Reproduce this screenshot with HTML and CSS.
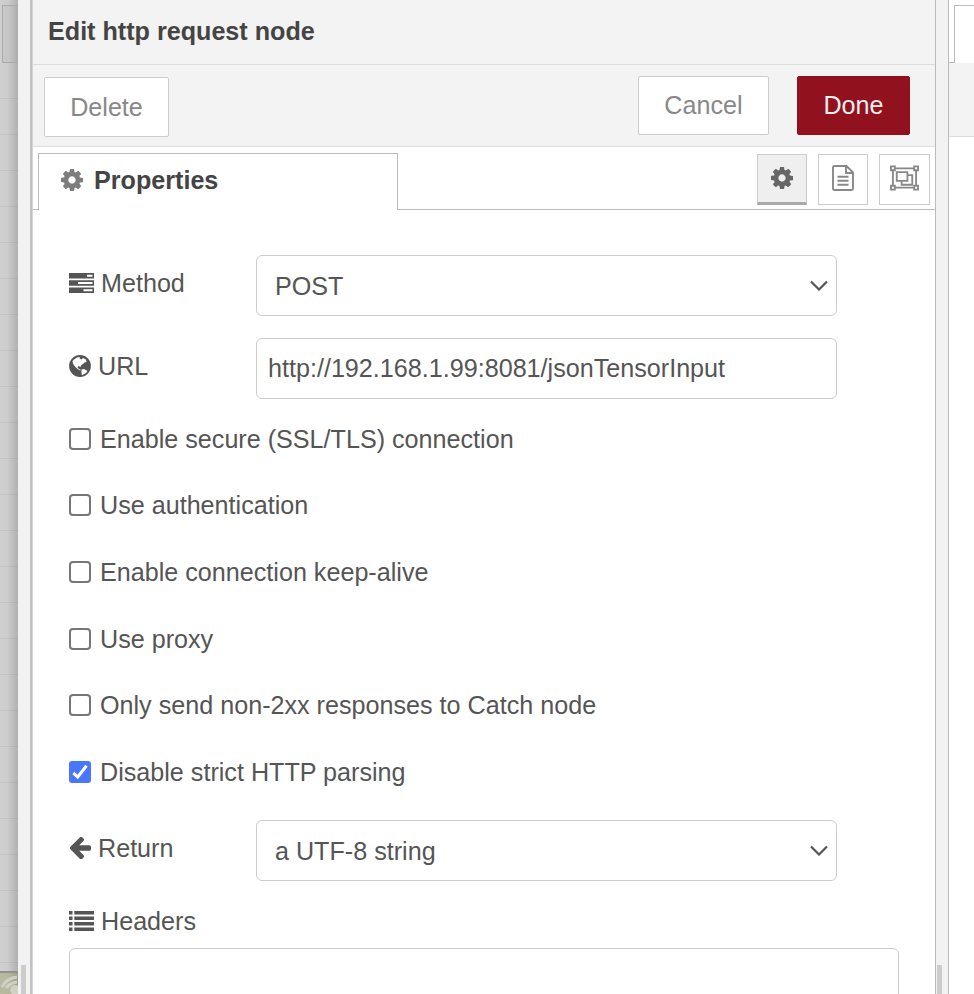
FILE: index.html
```html
<!DOCTYPE html>
<html lang="en">
<head>
<meta charset="utf-8">
<title>Edit http request node</title>
<link rel="stylesheet" href="styles.css">
</head>
<body>
<svg class="defs" aria-hidden="true">
  <symbol id="cog" viewBox="128 128 1536 1536"><path d="M1152 896q0-106-75-181t-181-75-181 75-75 181 75 181 181 75 181-75 75-181zm512-109v222q0 12-8 23t-20 13l-185 28q-19 54-39 91 35 50 107 138 10 12 10 25t-9 23q-27 37-99 108t-94 71q-12 0-26-9l-138-108q-44 23-91 38-16 136-29 186-7 28-36 28h-222q-14 0-24.500-8.500t-11.500-21.500l-28-184q-49-16-90-37l-141 107q-10 9-25 9-14 0-25-11-126-114-165-168-7-10-7-23 0-12 8-23 15-21 51-66.500t54-70.500q-27-50-41-99l-183-27q-13-2-21-12.500t-8-23.500v-222q0-12 8-23t19-13l186-28q14-46 39-92-40-57-107-138-10-12-10-24 0-10 9-23 26-36 98.500-107.500t94.500-71.500q13 0 26 10l138 107q44-23 91-38 16-136 29-186 7-28 36-28h222q14 0 24.500 8.500t11.500 21.500l28 184q49 16 90 37l142-107q9-9 24-9 13 0 25 10 129 119 165 170 7 8 7 22 0 12-8 23-15 21-51 66.500t-54 70.500q26 50 41 98l183 28q13 2 21 12.500t8 23.500z"/></symbol>
</svg>
<div class="app">
  <div class="workspace">
    <div class="ws-tab"></div>
    <div class="ws-grid"></div>
    <div class="ws-node"><svg width="32" height="21" viewBox="0 0 32 21"><path d="M2 14Q7 5 17 4M6 15Q10 10 17 9" fill="none" stroke="#d0d0c4" stroke-width="3"/><circle cx="15" cy="17" r="5" fill="#d0d0c4"/></svg></div>
  </div>
  <div class="bar bar-left"><i class="grip"></i></div>
  <div class="gutter"></div>
  <main class="tray">
    <header class="title">Edit http request node</header>
    <div class="toolbar">
      <button class="btn delete">Delete</button>
      <button class="btn cancel">Cancel</button>
      <button class="btn done">Done</button>
    </div>
    <div class="tabs">
      <div class="tab-pre"></div>
      <div class="tab"><svg class="cog"><use href="#cog"/></svg><span>Properties</span></div>
      <div class="tab-tools">
        <div class="tool active"><svg width="22" height="22"><use href="#cog"/></svg></div>
        <div class="tool"><svg width="22" height="26" viewBox="0 0 22 26"><path d="M2.500 1H14.500L21 7.500V23.500Q21 25 19.500 25H2.500Q1 25 1 23.500V2.500Q1 1 2.500 1ZM14 1V8H21M5.500 11.800H16.500M5.500 15.800H16.500M5.500 19.800H16.500" fill="none" stroke="#888" stroke-width="1.900"/></svg></div>
        <div class="tool wide"><svg width="29" height="26" viewBox="0 0 30 26" fill="none" stroke="#888" stroke-width="1.900"><path d="M5 3H25M5 23H25M3 5V21M27 5V21M1 1H5V5H1ZM25 1H29V5H25ZM1 21H5V25H1ZM25 21H29V25H25ZM7 7H18V16H7ZM18 10H23V20H12V16"/></svg></div>
      </div>
    </div>
    <form class="form">
      <div class="row">
        <label><svg width="25" height="20" viewBox="0 0 25 20"><path fill="#555" d="M0 0H25V5.600H0ZM0 7.200H25V12.800H0ZM0 14.400H25V20H0Z"/><path fill="#fff" d="M18 1.800H23.500V3.800H18ZM9 9H23.500V11H9ZM14.500 16.200H23.500V18.200H14.500Z"/></svg>Method</label>
        <div class="field select"><span>POST</span><svg width="18" height="11" viewBox="0 0 18 11"><path d="M1 1.500L9 9.500L17 1.500"/></svg></div>
      </div>
      <div class="row">
        <label><svg width="22" height="22" viewBox="0 0 22 22"><circle cx="11" cy="11" r="10.900" fill="#555"/><path fill="#fff" d="M5 4.500L8 2.500L11 2L10.500 3.500L12.500 4.500L14 3L17 4.500L17.500 7L15.500 7.500L14 9L12 10.500L11.500 12L9.500 11L8.500 12.500L10 14L12 15L11 15.500L8 13.500L5.500 11L4 8.500L3.500 6ZM12.500 14.500L15 14L18.500 16L17 18L13 20.300L12.500 18Z"/></svg>URL</label>
        <div class="field input">http://192.168.1.99:8081/jsonTensorInput</div>
      </div>
      <div class="checks">
        <div class="check"><i class="box"></i>Enable secure (SSL/TLS) connection</div>
        <div class="check"><i class="box"></i>Use authentication</div>
        <div class="check"><i class="box"></i>Enable connection keep-alive</div>
        <div class="check"><i class="box"></i>Use proxy</div>
        <div class="check"><i class="box"></i>Only send non-2xx responses to Catch node</div>
        <div class="check"><i class="box on"><svg width="22" height="22" viewBox="0 0 22 22"><path d="M4.300 11.800L8.700 16L17.500 4.800" fill="none" stroke="#fff" stroke-width="3"/></svg></i>Disable strict HTTP parsing</div>
      </div>
      <div class="row">
        <label><svg width="22" height="22" viewBox="128 128 1536 1536"><path fill="#555" d="M1664 896v128q0 53-32.500 90.500t-84.500 37.500h-704l293 294q38 36 38 90t-38 90l-75 76q-37 37-90 37-52 0-91-37l-651-652q-37-37-37-90 0-52 37-91l651-650q38-38 91-38 52 0 90 38l75 74q38 38 38 91t-38 91l-293 293h704q52 0 84.500 37.500t32.500 90.500z" transform="translate(0 -64)"/></svg>Return</label>
        <div class="field select"><span>a UTF-8 string</span><svg width="18" height="11" viewBox="0 0 18 11"><path d="M1 1.500L9 9.500L17 1.500"/></svg></div>
      </div>
      <div class="headers"><svg width="25" height="20" viewBox="0 0 25 20"><path fill="#555" d="M0 0H3.500V3.500H0ZM5.300 0H25V3.500H5.300ZM0 5.500H3.500V9H0ZM5.300 5.500H25V9H5.300ZM0 11H3.500V14.500H0ZM5.300 11H25V14.500H5.300ZM0 16.500H3.500V20H0ZM5.300 16.500H25V20H5.300Z"/></svg>Headers</div>
      <div class="list"></div>
    </form>
  </main>
  <div class="bar bar-right"><i class="grip"></i></div>
  <aside class="sidebar">
    <div class="side-tabs"><div class="side-gap"></div><div class="side-tab"></div></div>
    <div class="side-head"></div>
  </aside>
</div>
</body>
</html>
```
FILE: styles.css
```css
* { box-sizing: border-box; }
body { margin: 0; overflow: hidden; font: 25.15px/30px "Liberation Sans", Arial, sans-serif; color: #555; background: #fff; }
svg { display: block; flex: none; }
.defs { position: absolute; width: 0; height: 0; }
.app { display: grid; grid-template-columns: 18px 12px 3px 903px 13px 25px; height: 994px; overflow: hidden; }

.workspace { display: flex; flex-direction: column; overflow: hidden; background: linear-gradient(90deg, #d0d0d0, #cdcdcd 40%, #b0b0b0); }
.ws-tab { flex: none; height: 58px; margin: 5px 0 0 2px; border: 1px solid #aaa; border-width: 1px 0 1px 1px; background: linear-gradient(90deg, #c8c8c8, #c5c5c5 40%, #acacac); }
.ws-grid { flex: none; height: 908px; background: repeating-linear-gradient(rgba(0, 0, 0, 0) 0 35px, rgba(0, 0, 0, .05) 35px 36px); }
.ws-node { flex: none; height: 23px; border-top: 2px solid #929292; background: linear-gradient(90deg, #babaa0, #b7b79c 50%, #9e9e87); }

.bar { background: #f2f2f2; display: flex; align-items: flex-end; }
.grip { width: 5px; height: 29px; background: #ccc; }
.bar-left .grip { margin-left: 3px; }
.bar-right { border-right: 1px solid #bbb; }
.bar-right .grip { margin-left: 1px; }
.gutter { background: linear-gradient(90deg, #c2c2c2 0 2px, #d4d4d4 2px); }

.tray { border-right: 1px solid #bbb; background: #fff; overflow: hidden; }
.title { height: 65px; padding: 16px 0 0 15px; border-bottom: 1px solid #ddd; background: #f3f3f3; color: #444; font-weight: bold; }
.toolbar { display: flex; height: 82px; padding: 11px 25px 0 11px; border-bottom: 1px solid #ddd; background: #f3f3f3; }
.btn { height: 60px; margin: 0; padding: 0; border: 1px solid #ccc; border-radius: 2px; background: #fff; color: #888; font: inherit; }
.delete { width: 125px; margin-top: 1px; }
.cancel { width: 131px; height: 59px; margin-left: auto; padding-bottom: 2px; }
.done { width: 113px; height: 59px; margin-left: 28px; padding-bottom: 2px; border-color: #8f101c; background: #91111e; color: #eee; }

.tabs { display: flex; height: 63px; padding-top: 6px; }
.tab-pre { width: 5px; border-bottom: 1px solid #bbb; }
.tab { display: flex; width: 360px; padding: 11px 0 0 22px; border: 1px solid #bbb; border-bottom: 0; color: #444; font-weight: bold; }
.cog { width: 22px; height: 22px; margin: 4px 11px 0 0; fill: #7d7d7d; }
.tab-tools { flex: 1; display: flex; justify-content: flex-end; gap: 11px; padding: 1px 5px 0 0; border-bottom: 1px solid #bbb; }
.tool { display: flex; justify-content: center; width: 50px; height: 51px; padding-top: 10px; border: 1px solid #ccc; }
.wide { width: 51px; }
.active { padding-top: 12px; background: #efefef; border-bottom: 3px solid #aaa; fill: #666; }

.form { padding: 45px 36px 0 36px; }
.row { display: flex; height: 61px; margin-bottom: 22px; }
.row label { display: flex; align-items: center; gap: 7px; width: 187px; height: 55px; }
.field { display: flex; align-items: center; width: 581px; height: 61px; border: 1px solid #ccc; border-radius: 6px; }
.select { justify-content: space-between; padding: 1px 8px 0 18px; }
.select svg { margin-bottom: 2px; }
.select path { fill: none; stroke: #555; stroke-width: 2.200; }
.input { padding: 0 0 2px 11px; }
.checks { height: 399px; padding-top: 0; margin-top: -1px; margin-bottom: 1px; }
.check { display: flex; align-items: center; gap: 9px; height: 37.600px; margin-bottom: 29px; }
.box { width: 22px; height: 22px; border: 2px solid #777; border-radius: 4px; }
.on { border: 0; background: #4876ff; border-radius: 3px; }
.headers { display: flex; align-items: center; gap: 7px; height: 35px; margin-bottom: 10px; }
.list { height: 80px; width: 830px; border: 1px solid #ccc; border-radius: 6px; }

.side-tabs { display: flex; height: 63px; padding-top: 5px; }
.side-gap { width: 5px; border-bottom: 1px solid #bbb; }
.side-tab { flex: 1; border: 1px solid #bbb; border-width: 1px 0 0 1px; }
.side-head { height: 74px; background: #f3f3f3; border-bottom: 1px solid #ddd; }
```
